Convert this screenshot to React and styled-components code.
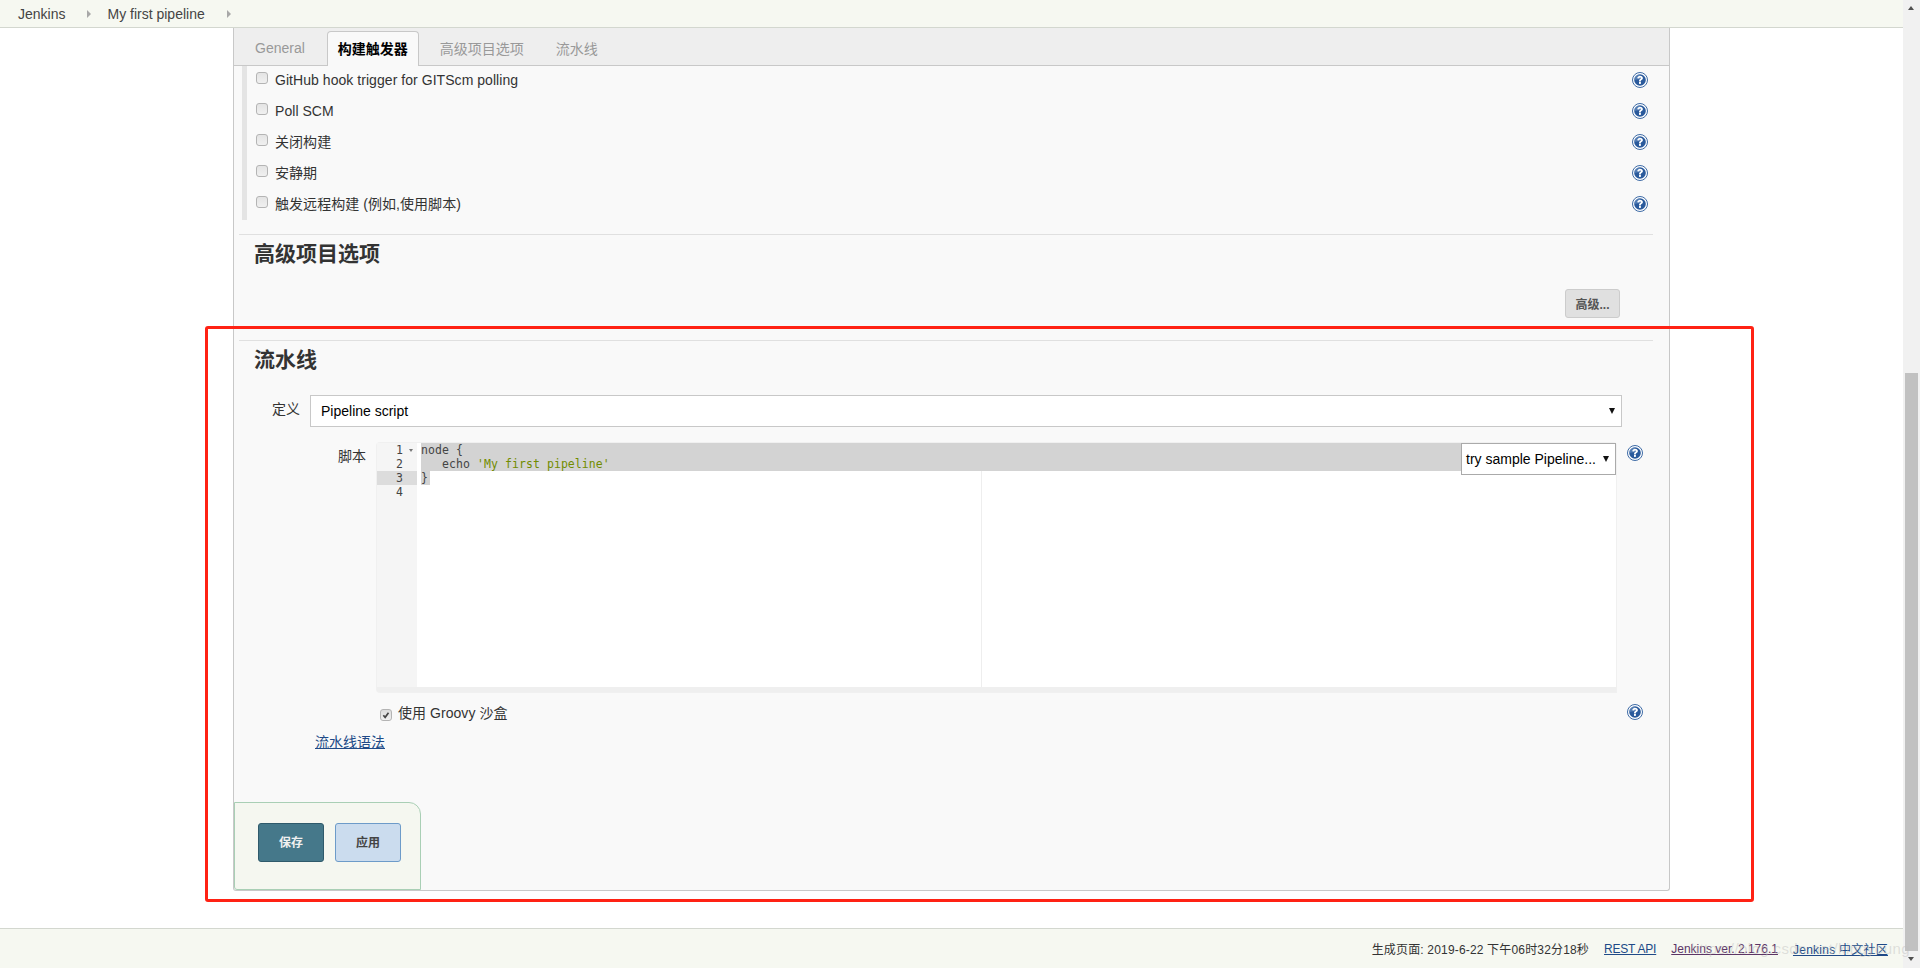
import React from "react";
import styled, { createGlobalStyle } from "styled-components";

const triggers = [
  "GitHub hook trigger for GITScm polling",
  "Poll SCM",
  "关闭构建",
  "安静期",
  "触发远程构建 (例如,使用脚本)",
];

const tabs = ["General", "构建触发器", "高级项目选项", "流水线"];

const HelpIcon = () => (
  <HelpSvg viewBox="0 0 16 16">
    <circle cx="8" cy="8" r="7.5" fill="#fff" stroke="#3d6aa5" />
    <circle cx="8" cy="8" r="5.8" fill="#2a5a9c" />
    <path d="M2.2 8A5.8 5.8 0 0 1 8 2.2V7z" fill="#6f94c4" opacity="0.6" />
    <path
      d="M5.2 6.2C5.4 4.6 6.6 3.7 8.1 3.7c1.7 0 2.8 1 2.8 2.3 0 1.1-.7 1.6-1.3 2.1-.5.4-.7.6-.7 1.3H7c0-1.3.4-1.8 1.1-2.3.5-.4.8-.6.8-1s-.3-.7-.8-.7-.9.3-1 1z"
      fill="#fff"
    />
    <rect x="7" y="10" width="1.9" height="1.9" fill="#fff" />
  </HelpSvg>
);

const App = () => {
  return (
    <Page>
      <GlobalStyle />
      <Main>
        <Breadcrumbs>
          <Crumb>Jenkins</Crumb>
          <CrumbArrow />
          <Crumb>My first pipeline</Crumb>
          <CrumbArrow />
        </Breadcrumbs>

        <Content>
          <Panel>
            <TabBar>
              {tabs.map((tab, i) => (
                <Tab key={tab} $active={i === 1}>
                  {tab}
                </Tab>
              ))}
            </TabBar>

            <TriggerList>
              {triggers.map((label, i) => (
                <TriggerRow key={label}>
                  <CheckBox />
                  <TriggerLabel $raised={i > 1}>{label}</TriggerLabel>
                  <HelpIcon />
                </TriggerRow>
              ))}
            </TriggerList>

            <SectionRule />
            <SectionTitle>高级项目选项</SectionTitle>
            <AdvancedRow>
              <AdvancedButton>高级...</AdvancedButton>
            </AdvancedRow>

            <PipelineRule />
            <SectionTitle>流水线</SectionTitle>

            <DefinitionRow>
              <FieldLabel>定义</FieldLabel>
              <SelectBox>
                Pipeline script
                <SelectArrow />
              </SelectBox>
            </DefinitionRow>

            <ScriptRow>
              <ScriptLabel>脚本</ScriptLabel>
              <Editor>
                <Gutter>
                  <GutterLine>
                    1<Fold />
                  </GutterLine>
                  <GutterLine>2</GutterLine>
                  <GutterLine $active>3</GutterLine>
                  <GutterLine>4</GutterLine>
                </Gutter>
                <CodeArea>
                  <PrintMargin />
                  <CodeLine $selected>node {"{"}</CodeLine>
                  <CodeLine $selected>
                    {"   echo "}
                    <CodeString>'My first pipeline'</CodeString>
                  </CodeLine>
                  <CodeLine>
                    <LastSelected>{"}"}</LastSelected>
                  </CodeLine>
                  <CodeLine />
                </CodeArea>
                <SampleSelect>
                  try sample Pipeline...
                  <SelectArrow />
                </SampleSelect>
              </Editor>
              <ScriptHelp>
                <HelpIcon />
              </ScriptHelp>
            </ScriptRow>

            <SandboxRow>
              <SandboxCheck>
                <svg viewBox="0 0 12 12" width="12" height="12">
                  <path d="M2.8 6.2l2.2 2.6 4-5.6" fill="none" stroke="#444" strokeWidth="2" />
                </svg>
              </SandboxCheck>
              <SandboxLabel>使用 Groovy 沙盒</SandboxLabel>
              <HelpIcon />
            </SandboxRow>

            <SyntaxLink href="#">流水线语法</SyntaxLink>

            <ButtonBar>
              <SaveButton>保存</SaveButton>
              <ApplyButton>应用</ApplyButton>
            </ButtonBar>
          </Panel>
        </Content>

        <Footer>
          <FooterText>生成页面: 2019-6-22 下午06时32分18秒</FooterText>
          <FooterLink href="#" $spacing="-0.2px">
            REST API
          </FooterLink>
          <FooterLink href="#" $visited>
            Jenkins ver. 2.176.1
          </FooterLink>
          <FooterLink href="#" $spacing="0.25px">
            Jenkins 中文社区
          </FooterLink>
          <Watermark>https://blog.csdn.net/kingyoung</Watermark>
        </Footer>
      </Main>

      <ScrollBar>
        <ScrollArrow $up />
        <ScrollTrack>
          <ScrollThumb />
        </ScrollTrack>
        <ScrollArrow />
      </ScrollBar>

      <Highlight />
    </Page>
  );
};

export default App;

const GlobalStyle = createGlobalStyle`
  html, body {
    margin: 0;
    padding: 0;
    overflow: hidden;
    background: #fff;
  }
  * {
    box-sizing: border-box;
  }
`;

const fontStack = `"Liberation Sans", "Noto Sans CJK SC", sans-serif`;

const Page = styled.div`
  position: relative;
  display: flex;
  width: 1920px;
  height: 968px;
  overflow: hidden;
  font-family: ${fontStack};
  font-size: 14px;
  color: #333;
`;

const Main = styled.div`
  flex: 1;
  display: flex;
  flex-direction: column;
  min-width: 0;
`;

const Breadcrumbs = styled.div`
  height: 28px;
  flex: none;
  display: flex;
  align-items: center;
  padding-left: 18px;
  background: #f6f8f1;
  border-bottom: 1px solid #d3d7cf;
`;

const Crumb = styled.span`
  color: #444;
  font-size: 14px;
`;

const CrumbArrow = styled.span`
  width: 0;
  height: 0;
  margin: 0 16px 0 22px;
  border-left: 4px solid #a8a8a8;
  border-top: 4px solid transparent;
  border-bottom: 4px solid transparent;
`;

const Content = styled.div`
  flex: 1;
  min-height: 0;
  padding: 0 233px 37px 233px;
`;

const Panel = styled.div`
  position: relative;
  height: 100%;
  display: flex;
  flex-direction: column;
  background: #f9f9f9;
  border: 1px solid #c8c8c8;
  border-top: none;
  border-radius: 0 0 3px 3px;
`;

const TabBar = styled.div`
  height: 38px;
  flex: none;
  display: flex;
  align-items: flex-end;
  padding-left: 10px;
  background: #eeeeee;
  border-bottom: 1px solid #c8c8c8;
`;

const Tab = styled.div`
  height: ${(p) => (p.$active ? "35px" : "34px")};
  margin-bottom: ${(p) => (p.$active ? "-1px" : "0")};
  margin-left: ${(p) => (p.$active ? "1px" : "0")};
  margin-right: 10px;
  display: flex;
  align-items: center;
  padding: 0 10px 2px;
  font-size: 14px;
  font-weight: ${(p) => (p.$active ? "bold" : "normal")};
  color: ${(p) => (p.$active ? "#000" : "#999")};
  background: ${(p) => (p.$active ? "#f9f9f9" : "transparent")};
  border: 1px solid ${(p) => (p.$active ? "#c8c8c8" : "transparent")};
  border-bottom: none;
  border-radius: 4px 4px 0 0;
`;

const TriggerList = styled.div`
  display: flex;
  flex-direction: column;
  margin-left: 8px;
  height: 154px;
  border-left: 5px solid #e4e4e4;
  flex: none;
`;

const TriggerRow = styled.div`
  height: 31px;
  flex: none;
  display: flex;
  align-items: center;
  padding-left: 9px;
  padding-right: 18px;
  width: 1419px;
  &:first-child {
    margin-top: -2px;
  }
`;

const CheckBox = styled.span`
  width: 12px;
  height: 12px;
  flex: none;
  margin-top: -4px;
  background: linear-gradient(#e4e4e4, #f0f0f0);
  border: 1px solid #b4b4b4;
  border-radius: 3px;
`;

const SandboxCheck = styled(CheckBox)`
  display: flex;
  align-items: center;
  justify-content: center;
  margin-top: 6px;
  background: linear-gradient(#dcdcdc, #f0f0f0);
`;

const TriggerLabel = styled.span`
  flex: 1;
  margin-left: 7px;
  margin-bottom: ${(p) => (p.$raised ? "2px" : "0")};
  letter-spacing: 0.05px;
  color: #333;
`;

const HelpSvg = styled.svg`
  width: 16px;
  height: 16px;
  flex: none;
`;

const SectionRule = styled.div`
  height: 1px;
  flex: none;
  margin: 14px 16px 0 5px;
  background: #e0e0e0;
`;

const PipelineRule = styled(SectionRule)`
  margin-top: 0;
`;

const SectionTitle = styled.h2`
  margin: 6px 0 0 20px;
  height: 26px;
  flex: none;
  font-size: 21px;
  line-height: 26px;
  font-weight: bold;
  color: #333;
`;

const AdvancedRow = styled.div`
  height: 73px;
  flex: none;
  display: flex;
  justify-content: flex-end;
  align-items: flex-start;
  padding: 22px 49px 0 0;
`;

const AdvancedButton = styled.button`
  width: 55px;
  height: 29px;
  padding: 0;
  font-family: ${fontStack};
  font-size: 12px;
  font-weight: bold;
  color: #555;
  background: #e0e0e0;
  border: 1px solid #cccccc;
  border-radius: 3px;
`;

const DefinitionRow = styled.div`
  height: 32px;
  flex: none;
  margin-top: 22px;
  display: flex;
  align-items: flex-start;
  padding-left: 38px;
`;

const FieldLabel = styled.span`
  width: 38px;
  line-height: 28px;
  flex: none;
`;

const SelectBox = styled.div`
  position: relative;
  width: 1312px;
  height: 32px;
  display: flex;
  align-items: center;
  justify-content: space-between;
  padding: 0 6px 0 10px;
  background: #fff;
  border: 1px solid #c8c8c8;
  color: #000;
`;

const SelectArrow = styled.span`
  width: 0;
  height: 0;
  border-left: 3.5px solid transparent;
  border-right: 3.5px solid transparent;
  border-top: 6px solid #111;
`;

const ScriptRow = styled.div`
  height: 249px;
  flex: none;
  margin-top: 16px;
  display: flex;
  align-items: flex-start;
  padding-left: 104px;
`;

const ScriptLabel = styled.span`
  width: 39px;
  line-height: 27px;
  flex: none;
`;

const Editor = styled.div`
  position: relative;
  width: 1239px;
  height: 249px;
  flex: none;
  display: flex;
  background: #fff;
  border-bottom: 5px solid #efefef;
  border-radius: 3px 3px 0 3px;
  box-shadow: 0 0 0 1px #f0f0f0;
  font-family: "DejaVu Sans Mono", "Liberation Mono", monospace;
  font-size: 11.5px;
`;

const Gutter = styled.div`
  width: 40px;
  flex: none;
  background: #f5f5f5;
  color: #444;
`;

const GutterLine = styled.div`
  position: relative;
  height: 14px;
  line-height: 14px;
  text-align: right;
  padding-right: 14px;
  background: ${(p) => (p.$active ? "#dcdcdc" : "transparent")};
`;

const Fold = styled.span`
  position: absolute;
  top: 6px;
  right: 4px;
  width: 0;
  height: 0;
  border-left: 2.5px solid transparent;
  border-right: 2.5px solid transparent;
  border-top: 3px solid #777;
`;

const CodeArea = styled.div`
  position: relative;
  flex: 1;
  padding-left: 4px;
  color: #444;
  letter-spacing: 0.07px;
`;

const PrintMargin = styled.span`
  position: absolute;
  top: 0;
  bottom: 0;
  left: 564px;
  width: 1px;
  background: #eeeeee;
`;

const CodeLine = styled.div`
  position: relative;
  height: 14px;
  line-height: 14px;
  white-space: pre;
  background: ${(p) => (p.$selected ? "#d3d3d3" : "transparent")};
`;

const CodeString = styled.span`
  color: #718c00;
`;

const LastSelected = styled.span`
  display: inline-block;
  background: #d3d3d3;
  padding-right: 2px;
`;

const SampleSelect = styled.div`
  position: absolute;
  top: 0;
  right: 0;
  width: 155px;
  height: 32px;
  display: flex;
  align-items: center;
  justify-content: space-between;
  padding: 0 6px 0 4px;
  background: #fff;
  border: 1px solid #aaaaaa;
  font-family: ${fontStack};
  font-size: 14px;
  color: #000;
`;

const ScriptHelp = styled.div`
  margin: 2px 0 0 11px;
`;

const SandboxRow = styled.div`
  height: 16px;
  flex: none;
  margin-top: 12px;
  display: flex;
  align-items: center;
  padding-left: 146px;
  padding-right: 26px;
`;

const SandboxLabel = styled.span`
  flex: 1;
  margin-left: 6px;
  letter-spacing: 0.05px;
`;

const SyntaxLink = styled.a`
  align-self: flex-start;
  margin: 11px 0 0 81px;
  color: #204a87;
`;

const ButtonBar = styled.div`
  position: absolute;
  left: 0;
  bottom: 0;
  width: 187px;
  height: 88px;
  display: flex;
  align-items: flex-start;
  gap: 11px;
  padding: 20px 0 0 23px;
  background: #f5f7f0;
  border: 1px solid #a9cfb5;
  border-radius: 0 12px 0 3px;
`;

const SaveButton = styled.button`
  width: 66px;
  height: 39px;
  padding: 0 0 2px;
  font-family: ${fontStack};
  font-size: 12px;
  font-weight: bold;
  color: #f0f0f0;
  background: #45788a;
  border: 1px solid #2f5a6b;
  border-radius: 3px;
`;

const ApplyButton = styled(SaveButton)`
  color: #444;
  background: #cbdcee;
  border-color: #6d9bc9;
`;

const Footer = styled.div`
  position: relative;
  height: 40px;
  flex: none;
  display: flex;
  align-items: center;
  justify-content: flex-end;
  gap: 15px;
  padding-right: 15px;
  background: #f6f8f1;
  border-top: 1px solid #d3d7cf;
  font-size: 12px;
`;

const FooterText = styled.span`
  color: #333;
  letter-spacing: 0.17px;
`;

const FooterLink = styled.a`
  color: ${(p) => (p.$visited ? "#5c3566" : "#204a87")};
  letter-spacing: ${(p) => p.$spacing || "0"};
`;

const Watermark = styled.span`
  position: absolute;
  right: -7px;
  top: 11px;
  font-size: 15px;
  letter-spacing: 0.4px;
  color: rgba(190, 190, 190, 0.45);
  pointer-events: none;
`;

const ScrollBar = styled.div`
  width: 17px;
  flex: none;
  display: flex;
  flex-direction: column;
  background: #f1f1f1;
`;

const ScrollArrow = styled.div`
  height: 17px;
  flex: none;
  position: relative;
  &::after {
    content: "";
    position: absolute;
    left: 5px;
    top: 6px;
    border-left: 3.5px solid transparent;
    border-right: 3.5px solid transparent;
    ${(p) =>
      p.$up ? "border-bottom: 4px solid #505050;" : "border-top: 4px solid #505050;"}
  }
`;

const ScrollTrack = styled.div`
  flex: 1;
  display: flex;
  flex-direction: column;
  justify-content: flex-end;
  padding: 0 2px;
`;

const ScrollThumb = styled.div`
  height: 578px;
  background: #c1c1c1;
`;

const Highlight = styled.div`
  position: absolute;
  left: 205px;
  top: 326px;
  width: 1549px;
  height: 576px;
  border: 3px solid #ff2214;
  border-radius: 3px;
  pointer-events: none;
`;
